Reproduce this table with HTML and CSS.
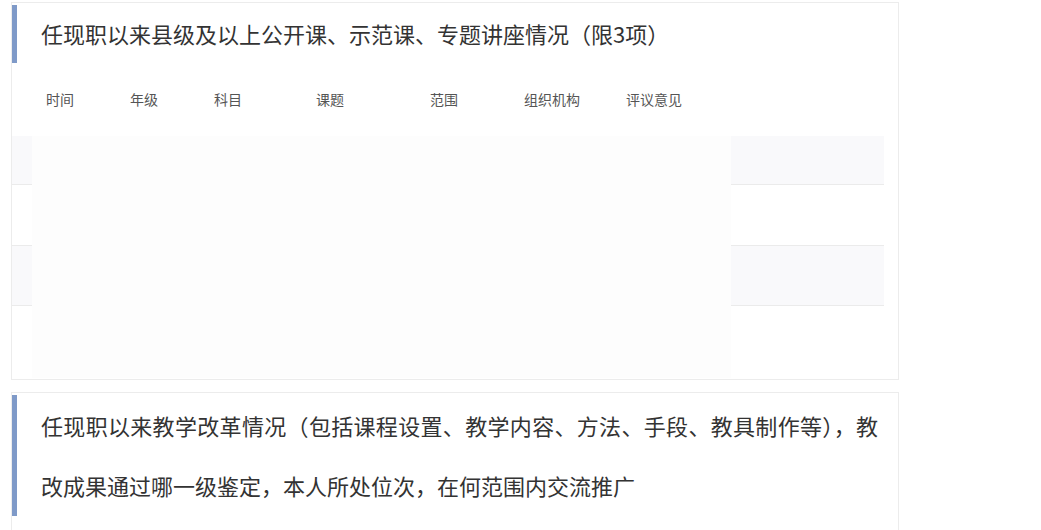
FILE: index.html
```html
<!DOCTYPE html>
<html lang="zh-CN">
<head>
<meta charset="utf-8">
<link rel="stylesheet" href="styles.css">
</head>
<body>
<section class="card card-table">
  <h2 class="title">任现职以来县级及以上公开课、示范课、专题讲座情况（限3项）</h2>
  <div class="table">
    <div class="thead">
      <span class="c1">时间</span>
      <span class="c2">年级</span>
      <span class="c3">科目</span>
      <span class="c4">课题</span>
      <span class="c5">范围</span>
      <span class="c6">组织机构</span>
      <span class="c7">评议意见</span>
    </div>
    <div class="tbody">
      <div class="row odd first"></div>
      <div class="row second"></div>
      <div class="row odd"></div>
      <div class="row last"></div>
      <div class="mask"></div>
    </div>
  </div>
</section>
<section class="card card-text">
  <h2 class="title title-wrap">任现职以来教学改革情况（包括课程设置、教学内容、方法、手段、教具制作等），教改成果通过哪一级鉴定，本人所处位次，在何范围内交流推广</h2>
</section>
</body>
</html>
```

FILE: styles.css
```css
html, body {
  margin: 0;
  padding: 0;
  background: #ffffff;
}

body {
  font-family: "Noto Sans CJK SC", "Liberation Sans", sans-serif;
  color: #333333;
  padding-top: 2px;
}

.card {
  box-sizing: border-box;
  width: 888px;
  margin-left: 11px;
  border: 1px solid #ececec;
  padding-top: 2px;
  background: #ffffff;
}

.card-table {
  height: 378px;
}

.card-text {
  margin-top: 12px;
  height: 160px;
}

.title {
  margin: 0;
  font-weight: normal;
  font-size: 22px;
  line-height: 56px;
  padding-bottom: 2px;
  color: #333333;
  border-left: 5px solid #7f9ac8;
  padding-left: 24px;
}

.title-wrap {
  line-height: 60px;
  padding-bottom: 1px;
  padding-right: 20px;
  text-align: justify;
}

.table {
  margin-right: 14px;
}

.thead {
  box-sizing: border-box;
  display: flex;
  align-items: center;
  height: 73px;
  padding-bottom: 1px;
  font-size: 14px;
  color: #555555;
}

.thead span {
  flex: none;
}

.c1 { margin-left: 34px; width: 84px; }
.c2 { width: 84px; }
.c3 { width: 102px; }
.c4 { width: 114px; }
.c5 { width: 94px; }
.c6 { width: 102px; }
.c7 { width: 80px; }

.tbody {
  position: relative;
}

.row {
  height: 59px;
  border-bottom: 1px solid #ebebeb;
}

.row.first {
  height: 48px;
}

.row.second {
  height: 60px;
}

.row.odd {
  background: #f9f9fb;
}

.row.last {
  border-bottom: none;
  height: 72px;
}

.mask {
  position: absolute;
  left: 20px;
  top: 0;
  width: 699px;
  bottom: 0;
  background: #fdfdfd;
}
```
